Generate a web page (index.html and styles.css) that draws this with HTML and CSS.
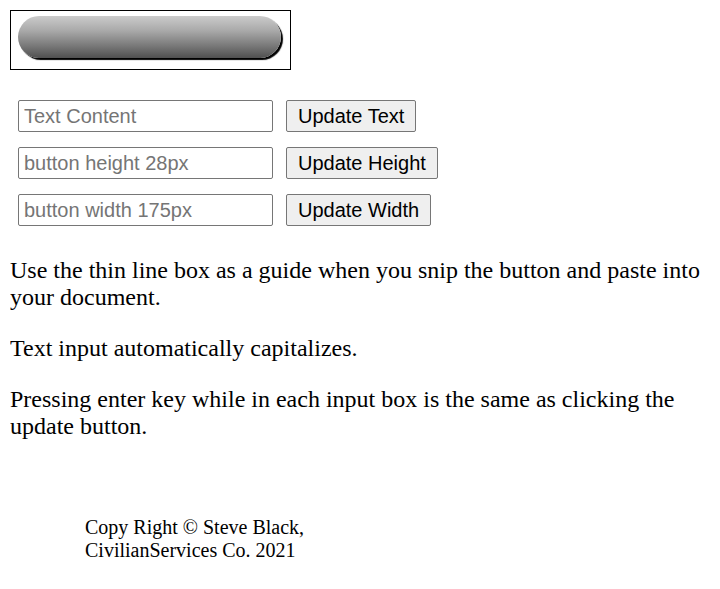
FILE: index.html
```html
<!DOCTYPE html>
<html>
<head>
<meta charset="utf-8">
<title>Button Maker</title>
<link rel="stylesheet" href="styles.css">
</head>
<body>
<div class="guide">
  <div class="pill"></div>
</div>
<div class="controls">
  <div class="row">
    <input class="field" type="text" placeholder="Text Content">
    <button class="btn">Update Text</button>
  </div>
  <div class="row">
    <input class="field" type="text" placeholder="button height 28px">
    <button class="btn">Update Height</button>
  </div>
  <div class="row">
    <input class="field" type="text" placeholder="button width 175px">
    <button class="btn">Update Width</button>
  </div>
</div>
<p class="note">Use the thin line box as a guide when you snip the button and paste into your document.</p>
<p class="note">Text input automatically capitalizes.</p>
<p class="note">Pressing enter key while in each input box is the same as clicking the update button.</p>
<div class="footer">Copy Right © Steve Black,<br>CivilianServices Co. 2021</div>
</body>
</html>
```

FILE: styles.css
```css
html, body {
  background: #ffffff;
}
body {
  margin: 10px;
  font-family: "Liberation Serif", "Times New Roman", serif;
  color: #000;
}
.guide {
  box-sizing: border-box;
  width: 281px;
  height: 60px;
  border: 1px solid #000;
  padding: 5px 0 0 7px;
}
.pill {
  width: 263px;
  height: 42px;
  border-radius: 21px;
  background: linear-gradient(to bottom, #cbcbcb 0%, #a9a9a9 35%, #7a7a7a 70%, #505050 100%);
  box-shadow: 2px 2px 1px #000;
}
.controls {
  margin-top: 30px;
  padding-bottom: 7px;
  padding-left: 8px;
  display: flex;
  flex-direction: column;
  gap: 15px;
}
.row {
  display: flex;
  align-items: center;
  gap: 13px;
}
.field {
  box-sizing: border-box;
  width: 255px;
  height: 32px;
  margin: 0;
  padding: 1px 5px;
  border: 1px solid #767676;
  border-radius: 2px;
  font-family: "Liberation Sans", Arial, sans-serif;
  font-size: 20px;
  color: #000;
  background: #fff;
}
.field::placeholder {
  color: #757575;
}
.btn {
  box-sizing: border-box;
  height: 32px;
  margin: 0;
  padding: 0 11px;
  border: 1px solid #767676;
  border-radius: 2px;
  background: #efefef;
  font-family: "Liberation Sans", Arial, sans-serif;
  font-size: 20px;
  color: #000;
}
.note {
  font-size: 24px;
  line-height: 27px;
  margin: 24px 0;
}
.footer {
  margin-top: 76px;
  margin-left: 75px;
  font-size: 20px;
  line-height: 23px;
}
```
